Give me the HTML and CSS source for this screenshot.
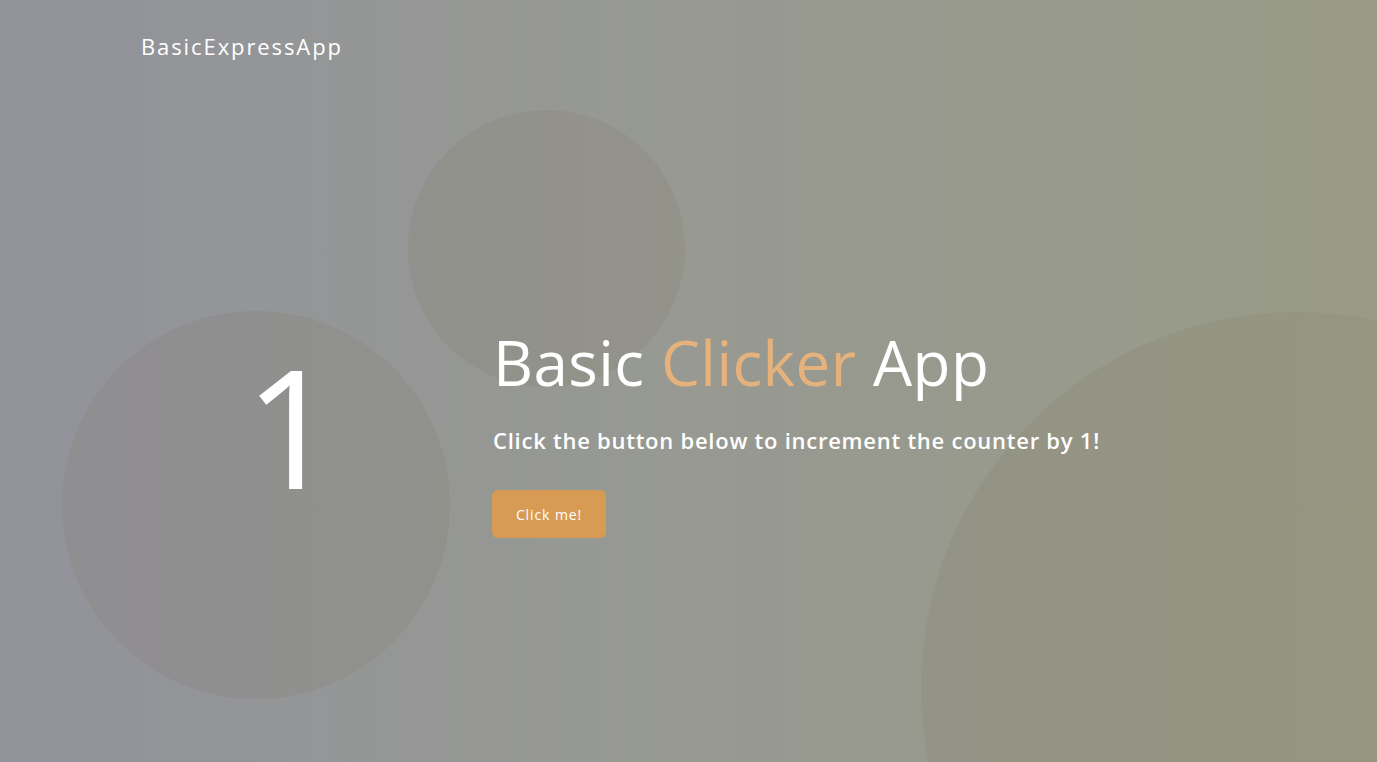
FILE: index.html
```html
<!DOCTYPE html>
<html lang="en">
<head>
<meta charset="utf-8">
<title>BasicExpressApp</title>
<link rel="stylesheet" href="styles.css">
</head>
<body>
<div class="page">
  <div class="bubble bubble-left"></div>
  <div class="bubble bubble-top"></div>
  <div class="bubble bubble-right"></div>
  <header class="navbar">
    <a class="brand" href="#">BasicExpressApp</a>
  </header>
  <main class="hero">
    <div class="counter-col">
      <span class="counter">1</span>
    </div>
    <div class="text-col">
      <h1 class="title">Basic <span class="accent">Clicker</span> App</h1>
      <p class="subtitle">Click the button below to increment the counter by 1!</p>
      <button class="btn" type="button">Click me!</button>
    </div>
  </main>
</div>
</body>
</html>
```

FILE: styles.css
```css
* { box-sizing: border-box; }
html, body { margin: 0; padding: 0; height: 100%; }
body {
  font-family: "Open Sans", "DejaVu Sans", sans-serif;
  color: #fff;
  overflow: hidden;
}
.page {
  position: relative;
  width: 100%;
  height: 100vh;
  overflow: hidden;
  background: linear-gradient(90deg, #92939b 0%, #979992 50%, #999b87 100%);
}
.bubble {
  position: absolute;
  border-radius: 50%;
  background: rgba(120, 105, 85, 0.13);
  pointer-events: none;
}
.bubble-left { left: 62px; top: 311px; width: 388px; height: 388px; }
.bubble-top { left: 408px; top: 110px; width: 277px; height: 277px; }
.bubble-right { left: 921px; top: 312px; width: 752px; height: 752px; }

.navbar {
  position: relative;
  height: 80px;
  padding: 31px 0 0 141px;
}
.brand {
  color: #fff;
  text-decoration: none;
  font-size: 22px;
  line-height: 30px;
  letter-spacing: 1.9px;
}
.hero {
  position: relative;
  display: flex;
  align-items: flex-start;
  padding: 251px 0 0 88px;
}
.counter-col {
  width: 405px;
  display: flex;
  justify-content: center;
  padding-left: 2px;
}
.counter {
  display: block;
  font-size: 164px;
  line-height: 1;
  font-weight: 500;
  margin-top: 13px;
}
.text-col {
  display: flex;
  flex-direction: column;
  align-items: flex-start;
}
.title {
  margin: 0;
  font-size: 62px;
  font-weight: 400;
  line-height: 1;
  letter-spacing: 0.4px;
}
.accent { color: #e6b27c; }
.subtitle {
  margin: 34px 0 0;
  font-size: 22px;
  line-height: 1.2;
  font-weight: 600;
  letter-spacing: 0.75px;
}
.btn {
  margin-top: 37px;
  margin-left: -1px;
  width: 114px;
  height: 48px;
  border: none;
  border-radius: 6px;
  background: #d89b53;
  color: #fff;
  font-family: inherit;
  font-size: 14px;
  letter-spacing: 0.9px;
}
```
